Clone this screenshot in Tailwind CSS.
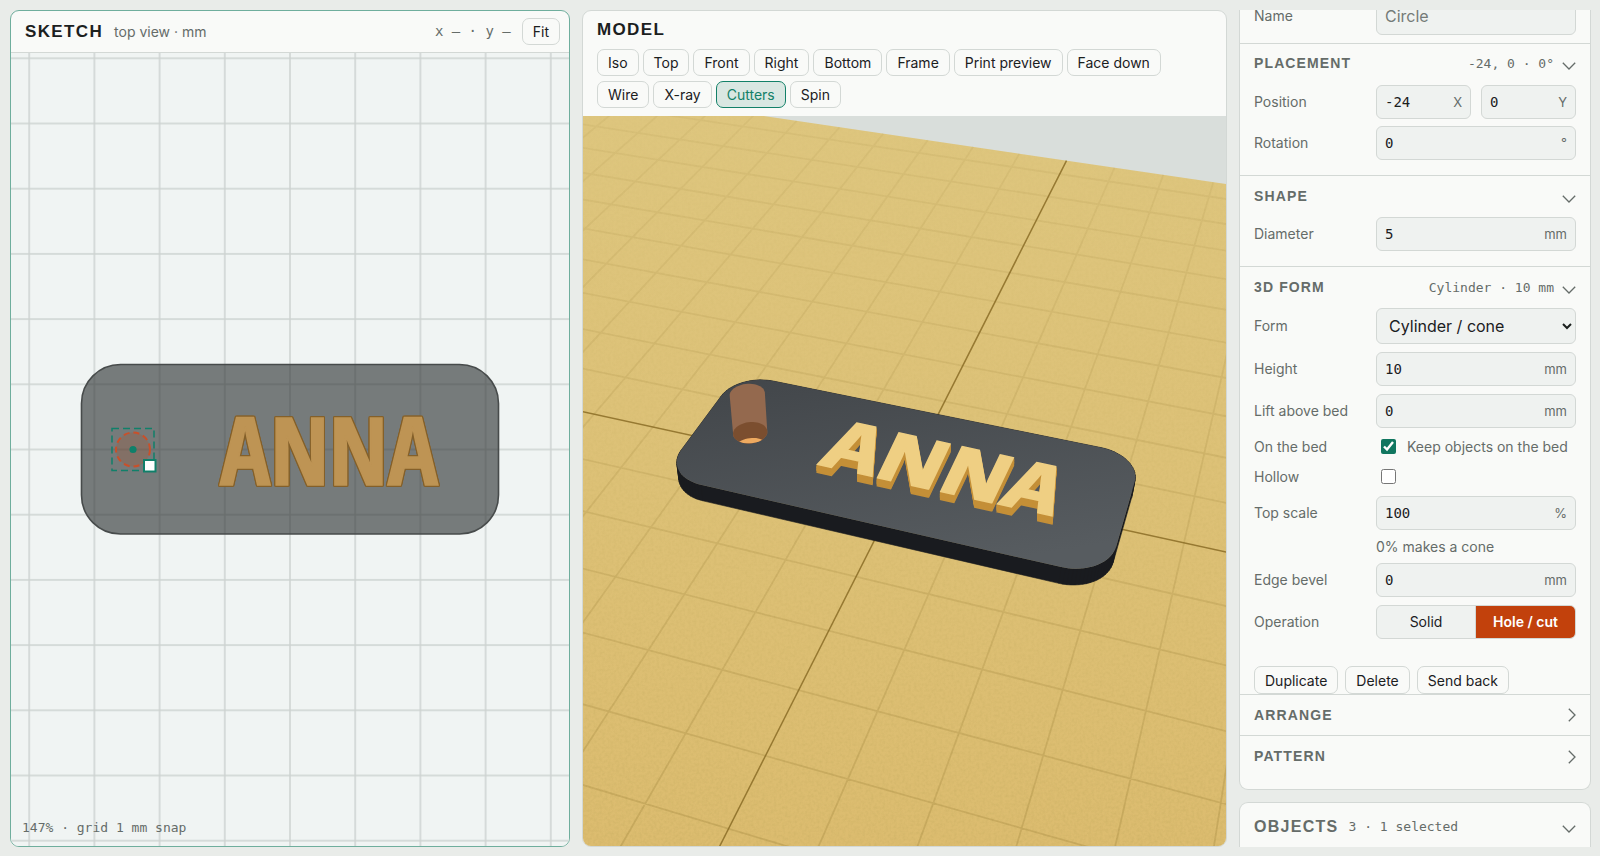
<!DOCTYPE html>
<html lang="en">
<head>
<meta charset="utf-8">
<title>Sketch to model</title>
<script src="https://cdn.jsdelivr.net/npm/@tailwindcss/browser@4"></script>
</head>
<body class="grid h-screen grid-cols-[560fr_645fr_352px] gap-[12px] overflow-hidden bg-[#e9ece9] pt-[10px] pr-[9px] pb-[9px] pl-[10px] font-['Inter',sans-serif] text-[14px] leading-[17px] text-[#1b201e]">

<!-- Sketch -->
<section class="flex min-w-0 flex-col overflow-hidden rounded-[9px] border border-[#6fae9d] bg-[#f9faf8]">
  <header class="flex h-[42px] shrink-0 items-center border-b border-[#d3d8d5] pr-[9px] pl-[14px]">
    <h2 class="font-['Liberation_Sans',sans-serif] text-[17px] font-bold tracking-[0.08em]">SKETCH</h2>
    <span class="ml-[11px] text-[#656c69]">top view · mm</span>
    <span class="ml-auto font-['DejaVu_Sans_Mono',monospace] whitespace-pre text-[#656c69]">x – · y –</span>
    <button class="ml-[11px] h-[27px] rounded-[7px] border border-[#d3d8d5] px-[10px]">Fit</button>
  </header>
  <div class="relative min-h-0 flex-1 bg-[#f0f4f3]">
    <svg class="block h-full w-full" viewBox="-279 -397 558 794" preserveAspectRatio="xMidYMid slice" role="img" aria-label="Top view of the name tag">
      <defs>
        <pattern id="grid" x="-32.6" y="-32.6" width="65.2" height="65.2" patternUnits="userSpaceOnUse">
          <path d="M32.6 0V65.2M0 32.6H65.2" stroke="#cdd3d1" stroke-width="1.5"/>
        </pattern>
      </defs>
      <rect x="-1000" y="-1000" width="2000" height="2000" fill="url(#grid)"/>
      <rect x="-208.5" y="-85" width="417" height="169.5" rx="39" fill="#2c3030" fill-opacity=".62" stroke="#474b4b" stroke-width="1.6"/>
      <g class="[filter:drop-shadow(1px_0_0_#84602a)_drop-shadow(-1px_0_0_#84602a)_drop-shadow(0_1px_0_#84602a)_drop-shadow(0_-1px_0_#84602a)]">
        <text x="39" y="35" text-anchor="middle" class="font-['Noto_Sans_ExtraCondensed','Open_Sans_Condensed','Roboto_Condensed','Liberation_Sans_Narrow','Liberation_Sans',sans-serif] text-[94px] font-bold" fill="#be9454" stroke="#be9454" stroke-width="1.5">ANNA</text>
      </g>
      <circle cx="-157" cy="0" r="17" fill="#c2410c" fill-opacity=".18" stroke="#c9502a" stroke-width="2" stroke-dasharray="6 4"/>
      <rect x="-178" y="-21" width="42" height="42" fill="none" stroke="#10806a" stroke-width="1.5" stroke-dasharray="7 4"/>
      <circle cx="-157" cy="0" r="3.6" fill="#10806a"/>
      <rect x="-146" y="10.500" width="11.500" height="11.500" fill="#fff" stroke="#10806a" stroke-width="2"/>
    </svg>
    <p class="absolute bottom-[10px] left-[11px] font-['DejaVu_Sans_Mono',monospace] text-[13px] text-[#656c69]">147% · grid 1 mm snap</p>
  </div>
</section>

<!-- Model -->
<section class="flex min-w-0 flex-col overflow-hidden rounded-[9px] border border-[#d3d8d5] bg-[#f9faf8]">
  <header class="shrink-0 px-[14px] pt-[9px] pb-[7px]">
    <h2 class="mb-[9px] font-['Liberation_Sans',sans-serif] text-[17px] leading-[20px] font-bold tracking-[0.08em]">MODEL</h2>
    <div class="flex flex-wrap gap-x-[4px] gap-y-[5px] pb-[1px]">
      <button class="h-[27px] rounded-[7px] border border-[#d3d8d5] px-[10px]">Iso</button>
      <button class="h-[27px] rounded-[7px] border border-[#d3d8d5] px-[10px]">Top</button>
      <button class="h-[27px] rounded-[7px] border border-[#d3d8d5] px-[10px]">Front</button>
      <button class="h-[27px] rounded-[7px] border border-[#d3d8d5] px-[10px]">Right</button>
      <button class="h-[27px] rounded-[7px] border border-[#d3d8d5] px-[10px]">Bottom</button>
      <button class="h-[27px] rounded-[7px] border border-[#d3d8d5] px-[10px]">Frame</button>
      <button class="h-[27px] rounded-[7px] border border-[#d3d8d5] px-[10px]">Print preview</button>
      <button class="mr-[40px] h-[27px] rounded-[7px] border border-[#d3d8d5] px-[10px]">Face down</button>
      <button class="h-[27px] rounded-[7px] border border-[#d3d8d5] px-[10px]">Wire</button>
      <button class="h-[27px] rounded-[7px] border border-[#d3d8d5] px-[10px]">X-ray</button>
      <button aria-pressed="true" class="h-[27px] rounded-[7px] border border-[#138068] bg-[#d9e7e2] px-[10px] text-[#138068]">Cutters</button>
      <button class="h-[27px] rounded-[7px] border border-[#d3d8d5] px-[10px]">Spin</button>
    </div>
  </header>
  <div class="min-h-0 flex-1 bg-[#d9dedb]">
    <svg class="block h-full w-full" viewBox="583 116 643 729" preserveAspectRatio="xMidYMid slice" role="img" aria-label="3D view of the name tag on the print bed">
      <defs>
        <linearGradient id="bedFill" x1="0" y1="0" x2="0" y2="1" gradientUnits="userSpaceOnUse" gradientTransform="matrix(729 0 0 729 0 116)">
          <stop offset="0" stop-color="#dec67e"/><stop offset="1" stop-color="#dcbc6f"/>
        </linearGradient>
        <linearGradient id="lineFade" x1="0" y1="116" x2="0" y2="845" gradientUnits="userSpaceOnUse">
          <stop offset="0" stop-color="#8a7028" stop-opacity=".08"/><stop offset=".5" stop-color="#8a7028" stop-opacity=".16"/><stop offset="1" stop-color="#8a7028" stop-opacity=".24"/>
        </linearGradient>
        <linearGradient id="topFill" x1="0.2" y1="0" x2="0.6" y2="1">
          <stop offset="0" stop-color="#43474b"/><stop offset="1" stop-color="#575c60"/>
        </linearGradient>
        <linearGradient id="grainFade" x1="0" y1="0" x2="0" y2="1">
          <stop offset="0" stop-color="#fff" stop-opacity=".15"/><stop offset="1" stop-color="#fff"/>
        </linearGradient>
        <mask id="grainMask"><rect x="583" y="116" width="643" height="729" fill="url(#grainFade)"/></mask>
        <filter id="grain"><feTurbulence type="fractalNoise" baseFrequency=".35" numOctaves="2" seed="4"/><feColorMatrix values="0 0 0 0 .5  0 0 0 0 .38  0 0 0 0 .1  1.1 0 0 0 -.42"/></filter>
        <clipPath id="bedClip"><path id="bedClipPath"/></clipPath>
        <clipPath id="holeClip"><path id="holeClipPath"/></clipPath>
      </defs>
      <path id="bed" fill="url(#bedFill)"/>
      <g clip-path="url(#bedClip)"><rect x="583" y="116" width="643" height="729" filter="url(#grain)" mask="url(#grainMask)" opacity=".5"/></g>
      <path id="bedGrid" fill="none" stroke="url(#lineFade)" stroke-width="1.8"/>
      <path id="bedAxes" fill="none" stroke="#8a6c26" stroke-opacity=".85" stroke-width="1.5"/>
      <path id="plateSide" fill="#191b1f" stroke="#191b1f" stroke-width=".6"/>
      <path id="plateTop" fill="url(#topFill)"/>
      <path id="cutterBody" fill="#94694e"/>
      <path id="cutterRim" fill="#7b4e2f"/>
      <path id="cutterFloor" fill="#eeaa60" clip-path="url(#holeClip)"/>
      <g class="[filter:drop-shadow(0_1px_0_#c48f37)_drop-shadow(0_2px_0_#c48f37)_drop-shadow(0_3px_0_#c48f37)_drop-shadow(0_2px_0_#c48f37)]">
        <text transform="matrix(1.071 .235 -.319 .671 930.9 492.6)" x="2" y="-5" text-anchor="middle" class="font-['Noto_Sans_ExtraCondensed','Open_Sans_Condensed','Roboto_Condensed','Liberation_Sans_Narrow','Liberation_Sans',sans-serif] text-[94px] font-bold" fill="#efcf83" stroke="#efcf83" stroke-width="2">ANNA</text>
      </g>
    </svg>
  </div>
</section>

<!-- Inspector -->
<aside class="flex min-h-0 flex-col gap-[12px] overflow-hidden text-[#656c69]">
  <div class="shrink-0 rounded-b-[9px] border border-t-0 border-[#d3d8d5] bg-[#f9faf8]">
    <div class="flex h-[33px] items-end overflow-hidden px-[14px] pb-[8px]">
      <label for="name" class="mb-[13px] w-[122px] shrink-0 leading-[12px]">Name</label>
      <input id="name" type="text" placeholder="Circle" class="h-[38px] min-w-0 flex-1 rounded-[6px] border border-[#d3d8d5] bg-[#eff2f0] px-[8px] text-[16px] placeholder:text-[#757b78]">
    </div>

    <section class="border-t border-[#d3d8d5] px-[14px] pb-[15px]">
      <button aria-expanded="true" class="mb-[3px] flex h-[38px] w-full items-center">
        <span class="font-['Liberation_Sans',sans-serif] font-bold tracking-[0.08em]">PLACEMENT</span>
        <span class="ml-auto font-['DejaVu_Sans_Mono',monospace] text-[13px]">-24, 0 · 0°</span>
        <svg class="mt-[5px] ml-[8px] h-[8px] w-[14px]" viewBox="0 0 14 8" fill="none" stroke="#656c69" stroke-width="1.3"><path d="M.8.8 7 7 13.200.8"/></svg>
      </button>
      <div class="grid grid-cols-[122px_minmax(0,1fr)] items-center gap-y-[7px]">
        <label for="px" class="pb-[2px]">Position</label>
        <div class="grid grid-cols-2 gap-[10px]">
          <div class="flex h-[34px] items-center rounded-[6px] border border-[#d3d8d5] bg-[#eff2f0] px-[8px]"><input id="px" type="text" value="-24" class="w-0 min-w-0 flex-1 bg-transparent font-['DejaVu_Sans_Mono',monospace] text-[#1b201e]"><span class="text-[13px]">X</span></div>
          <div class="flex h-[34px] items-center rounded-[6px] border border-[#d3d8d5] bg-[#eff2f0] px-[8px]"><input aria-label="Position Y" type="text" value="0" class="w-0 min-w-0 flex-1 bg-transparent font-['DejaVu_Sans_Mono',monospace] text-[#1b201e]"><span class="text-[13px]">Y</span></div>
        </div>
        <label for="rot" class="pb-[2px]">Rotation</label>
        <div class="flex h-[34px] items-center rounded-[6px] border border-[#d3d8d5] bg-[#eff2f0] px-[8px]"><input id="rot" type="text" value="0" class="w-0 min-w-0 flex-1 bg-transparent font-['DejaVu_Sans_Mono',monospace] text-[#1b201e]"><span class="text-[13px]">°</span></div>
      </div>
    </section>

    <section class="border-t border-[#d3d8d5] px-[14px] pb-[15px]">
      <button aria-expanded="true" class="mb-[1px] flex h-[40px] w-full items-center">
        <span class="font-['Liberation_Sans',sans-serif] font-bold tracking-[0.08em]">SHAPE</span>
        <svg class="mt-[5px] ml-auto h-[8px] w-[14px]" viewBox="0 0 14 8" fill="none" stroke="#656c69" stroke-width="1.3"><path d="M.8.8 7 7 13.200.8"/></svg>
      </button>
      <div class="grid grid-cols-[122px_minmax(0,1fr)] items-center">
        <label for="dia" class="pb-[2px]">Diameter</label>
        <div class="flex h-[34px] items-center rounded-[6px] border border-[#d3d8d5] bg-[#eff2f0] px-[8px]"><input id="dia" type="text" value="5" class="w-0 min-w-0 flex-1 bg-transparent font-['DejaVu_Sans_Mono',monospace] text-[#1b201e]"><span class="text-[13px]">mm</span></div>
      </div>
    </section>

    <section class="border-t border-[#d3d8d5] px-[14px]">
      <button aria-expanded="true" class="mb-[1px] flex h-[40px] w-full items-center">
        <span class="font-['Liberation_Sans',sans-serif] font-bold tracking-[0.08em]">3D FORM</span>
        <span class="ml-auto font-['DejaVu_Sans_Mono',monospace] text-[13px]">Cylinder · 10 mm</span>
        <svg class="mt-[5px] ml-[8px] h-[8px] w-[14px]" viewBox="0 0 14 8" fill="none" stroke="#656c69" stroke-width="1.3"><path d="M.8.8 7 7 13.200.8"/></svg>
      </button>
      <div class="grid grid-cols-[122px_minmax(0,1fr)] items-center gap-y-[8px]">
        <label for="form" class="pb-[2px]">Form</label>
        <select id="form" class="h-[36px] w-full rounded-[6px] border border-[#d3d8d5] bg-[#eff2f0] px-[8px] text-[16px] text-[#1b201e]"><option>Cylinder / cone</option></select>
        <label for="height" class="pb-[2px]">Height</label>
        <div class="flex h-[34px] items-center rounded-[6px] border border-[#d3d8d5] bg-[#eff2f0] px-[8px]"><input id="height" type="text" value="10" class="w-0 min-w-0 flex-1 bg-transparent font-['DejaVu_Sans_Mono',monospace] text-[#1b201e]"><span class="text-[13px]">mm</span></div>
        <label for="lift" class="pb-[2px]">Lift above bed</label>
        <div class="flex h-[34px] items-center rounded-[6px] border border-[#d3d8d5] bg-[#eff2f0] px-[8px]"><input id="lift" type="text" value="0" class="w-0 min-w-0 flex-1 bg-transparent font-['DejaVu_Sans_Mono',monospace] text-[#1b201e]"><span class="text-[13px]">mm</span></div>
        <span class="pb-[2px]">On the bed</span>
        <label class="flex h-[22px] items-center gap-[11px] pb-[2px] pl-[5px] whitespace-nowrap"><input type="checkbox" checked class="size-[15px] accent-[#10765f]">Keep objects on the bed</label>
        <label for="hollow" class="pb-[2px]">Hollow</label>
        <div class="flex h-[22px] items-center pb-[2px] pl-[5px]"><input id="hollow" type="checkbox" class="size-[15px] accent-[#10765f]"></div>
        <label for="top" class="pb-[2px]">Top scale</label>
        <div class="flex h-[34px] items-center rounded-[6px] border border-[#d3d8d5] bg-[#eff2f0] px-[8px]"><input id="top" type="text" value="100" class="w-0 min-w-0 flex-1 bg-transparent font-['DejaVu_Sans_Mono',monospace] text-[#1b201e]"><span class="text-[13px]">%</span></div>
        <p class="col-start-2">0% makes a cone</p>
        <label for="bevel" class="pb-[2px]">Edge bevel</label>
        <div class="flex h-[34px] items-center rounded-[6px] border border-[#d3d8d5] bg-[#eff2f0] px-[8px]"><input id="bevel" type="text" value="0" class="w-0 min-w-0 flex-1 bg-transparent font-['DejaVu_Sans_Mono',monospace] text-[#1b201e]"><span class="text-[13px]">mm</span></div>
        <span class="pb-[2px]">Operation</span>
        <div class="grid h-[34px] grid-cols-2 overflow-hidden rounded-[6px] border border-[#d3d8d5] bg-[#eff2f0]">
          <button class="border-r border-[#d3d8d5] pb-[2px] text-[#1b201e]">Solid</button>
          <button aria-pressed="true" class="bg-[#c2410c] pb-[2px] font-semibold text-white">Hole / cut</button>
        </div>
      </div>
      <div class="mt-[27px] flex gap-[7px] text-[#1b201e]">
        <button class="h-[28px] rounded-[7px] border border-[#d3d8d5] px-[10px]">Duplicate</button>
        <button class="h-[28px] rounded-[7px] border border-[#d3d8d5] px-[10px]">Delete</button>
        <button class="h-[28px] rounded-[7px] border border-[#d3d8d5] px-[10px]">Send back</button>
      </div>
    </section>

    <button aria-expanded="false" class="flex h-[41px] w-full items-center justify-between border-t border-[#d3d8d5] px-[14px]">
      <span class="font-['Liberation_Sans',sans-serif] font-bold tracking-[0.08em]">ARRANGE</span>
      <svg class="h-[14px] w-[8px]" viewBox="0 0 8 14" fill="none" stroke="#656c69" stroke-width="1.3"><path d="M.8.8 7 7 .8 13.200"/></svg>
    </button>
    <button aria-expanded="false" class="mb-[12px] flex h-[42px] w-full items-center justify-between border-t border-[#d3d8d5] px-[14px]">
      <span class="font-['Liberation_Sans',sans-serif] font-bold tracking-[0.08em]">PATTERN</span>
      <svg class="h-[14px] w-[8px]" viewBox="0 0 8 14" fill="none" stroke="#656c69" stroke-width="1.3"><path d="M.8.8 7 7 .8 13.200"/></svg>
    </button>
  </div>

  <div class="shrink-0 rounded-t-[9px] border border-b-0 border-[#d3d8d5] bg-[#f9faf8] px-[14px]">
    <button aria-expanded="true" class="flex h-[46px] w-full items-center">
      <span class="font-['Liberation_Sans',sans-serif] text-[16px] font-bold tracking-[0.08em]">OBJECTS</span>
      <span class="ml-[10px] font-['DejaVu_Sans_Mono',monospace] text-[13px]">3 · 1 selected</span>
      <svg class="mt-[5px] ml-auto h-[8px] w-[14px]" viewBox="0 0 14 8" fill="none" stroke="#656c69" stroke-width="1.3"><path d="M.8.8 7 7 13.200.8"/></svg>
    </button>
  </div>
</aside>

<script>
  // Camera projection; one unit on the bed is 10 mm, v runs toward the viewer, z is up.
  function project(u, v, z) {
    const w = 1 - 0.0136 * u - 0.0413 * v - 0.0378 * z;
    return [(904 + 53.8 * u - 59.3 * v - 32.5 * z) / w, (481.3 + 7.87 * u + 23.55 * v - 70.8 * z) / w];
  }
  const fmt = p => p[0].toFixed(1) + ' ' + p[1].toFixed(1);
  const poly = pts => 'M' + pts.map(fmt).join('L') + 'Z';
  const line = (a, b) => 'M' + fmt(project(...a)) + 'L' + fmt(project(...b));
  const set = (id, d) => document.getElementById(id).setAttribute('d', d);
  const B = 10.63;

  const bed = poly([[-B, -B], [B, -B], [B, B], [-B, B]].map(([u, v]) => project(u, v, 0)));
  set('bed', bed);
  set('bedClipPath', bed);
  let grid = '';
  for (let i = -10; i <= 10; i++) if (i) grid += line([i, -B, 0], [i, B, 0]) + line([-B, i, 0], [B, i, 0]);
  set('bedGrid', grid);
  set('bedAxes', line([0, -B, 0], [0, B, 0]) + line([-B, 0, 0], [B, 0, 0]));

  // Plate with rounded corners, 3 mm thick
  const outline = [];
  [[2.56, 0.68, 0], [-2.56, 0.68, 90], [-2.56, -0.68, 180], [2.56, -0.68, 270]].forEach(([cu, cv, start]) => {
    for (let a = 0; a <= 90; a += 5) {
      const t = (start + a) * Math.PI / 180;
      outline.push([cu + 0.6 * Math.cos(t), cv + 0.6 * Math.sin(t)]);
    }
  });
  set('plateSide', outline.map((p, i) => {
    const q = outline[(i + 1) % outline.length];
    return poly([project(...p, 0), project(...q, 0), project(...q, 0.3), project(...p, 0.3)]);
  }).join(''));
  set('plateTop', poly(outline.map(p => project(...p, 0.3))));

  // Cutter: 5 mm cylinder, 10 mm tall
  const ring = z => Array.from({ length: 48 }, (_, i) => {
    const t = i * Math.PI / 24;
    return project(-2.38 + 0.25 * Math.cos(t), 0.25 * Math.sin(t), z);
  });
  function hull(pts) {
    pts = pts.slice().sort((a, b) => a[0] - b[0] || a[1] - b[1]);
    const cross = (o, a, b) => (a[0] - o[0]) * (b[1] - o[1]) - (a[1] - o[1]) * (b[0] - o[0]);
    const half = list => {
      const h = [];
      for (const p of list) {
        while (h.length > 1 && cross(h[h.length - 2], h[h.length - 1], p) <= 0) h.pop();
        h.push(p);
      }
      h.pop();
      return h;
    };
    return half(pts).concat(half(pts.reverse()));
  }
  set('cutterBody', poly(hull(ring(0.3).concat(ring(1)))));
  set('cutterRim', poly(ring(0.3)));
  set('holeClipPath', poly(ring(0.3)));
  set('cutterFloor', poly(ring(0)));
</script>
</body>
</html>
